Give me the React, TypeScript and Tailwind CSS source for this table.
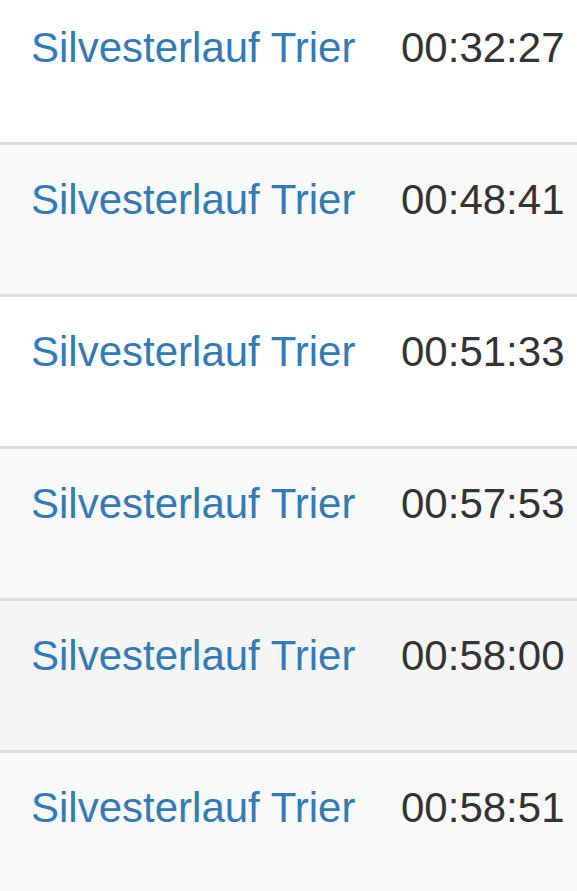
import React from 'react';

const results = [
    { race: 'Silvesterlauf Trier', time: '00:32:27', bg: 'bg-white' },
    { race: 'Silvesterlauf Trier', time: '00:48:41', bg: 'bg-[#f9f9f9]' },
    { race: 'Silvesterlauf Trier', time: '00:51:33', bg: 'bg-white' },
    { race: 'Silvesterlauf Trier', time: '00:57:53', bg: 'bg-[#f9f9f9]' },
    { race: 'Silvesterlauf Trier', time: '00:58:00', bg: 'bg-[#f5f5f5]' },
    { race: 'Silvesterlauf Trier', time: '00:58:51', bg: 'bg-[#f9f9f9]' },
];

export default function App() {
    return (
        <div className="w-[577px] h-[891px] overflow-hidden bg-white font-['Liberation_Sans',Arial,sans-serif] text-[42px] leading-[60px] text-[#333]">
            {/* Results table, scrolled slightly so the first row's top border is hidden */}
            <div className="-mt-[10px] flex flex-col">
                {results.map((r, i) => (
                    <div key={i} className={`flex h-[152px] border-t-[3px] border-[#ddd] pl-[7px] ${r.bg}`}>
                        <div className="w-[370px] shrink-0 px-[24px] pt-[25px] whitespace-nowrap">
                            <a href="#" className="text-[#337ab7]">{r.race}</a>
                        </div>
                        <div className="px-[24px] pt-[25px] whitespace-nowrap">{r.time}</div>
                    </div>
                ))}
            </div>
        </div>
    );
}
